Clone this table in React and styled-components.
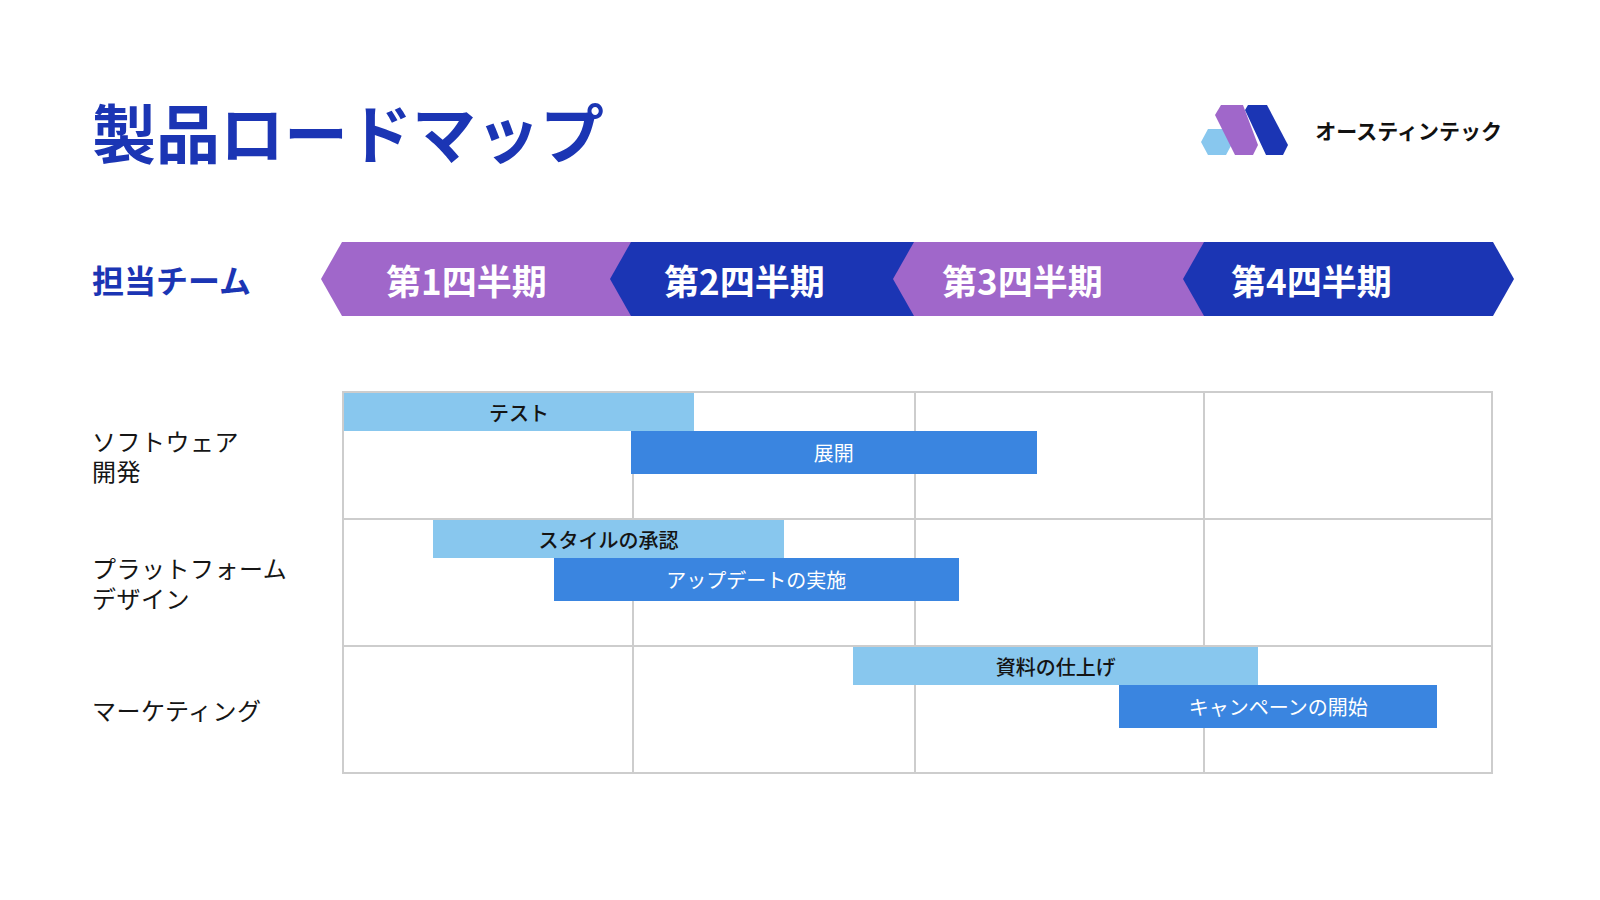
import React from 'react';
import styled, { createGlobalStyle } from 'styled-components';

const C = {
  blue: '#1b35b4',
  purple: '#a067ca',
  light: '#88c7ee',
  mid: '#3a85e0',
  line: '#cdcdcd',
  ink: '#151515',
};

const COLS = '289fr 283fr 290fr 289fr';

const GlobalStyle = createGlobalStyle`
  html, body { margin: 0; padding: 0; background: #fff; }
  body { font-family: "Noto Sans CJK JP", "Noto Sans", sans-serif; }
`;

const Page = styled.div`
  width: 1600px;
  height: 900px;
  box-sizing: border-box;
  padding: 93px 98px 0 92px;
  display: flex;
  flex-direction: column;
  gap: 75px;
  background: #fff;
`;

const Header = styled.header`
  height: 74px;
  display: flex;
  align-items: center;
  justify-content: space-between;
`;

const Title = styled.h1`
  margin: 0;
  font-size: 64px;
  line-height: 74px;
  font-weight: 700;
  color: ${C.blue};
`;

const Brand = styled.div`
  display: flex;
  align-items: center;
  gap: 25px;
`;

const BrandName = styled.span`
  font-size: 21px;
  font-weight: 700;
  color: #111;
`;

const QuarterRow = styled.div`
  display: grid;
  grid-template-columns: 250px 1151px;
  align-items: center;
  height: 74px;
`;

const TeamHeading = styled.div`
  font-size: 32px;
  font-weight: 700;
  color: ${C.blue};
`;

const Chevrons = styled.div`
  display: grid;
  grid-template-columns: ${COLS};
  height: 74px;
`;

const Chevron = styled.div`
  margin-left: -21px;
  margin-right: ${(p) => (p.$last ? '-21px' : '0')};
  background: ${(p) => (p.$tone === 'purple' ? C.purple : C.blue)};
  clip-path: ${(p) =>
    p.$last
      ? 'polygon(21px 0, calc(100% - 21px) 0, 100% 50%, calc(100% - 21px) 100%, 21px 100%, 0 50%)'
      : 'polygon(21px 0, 100% 0, 100% 100%, 21px 100%, 0 50%)'};
  display: flex;
  align-items: center;
  padding-left: ${(p) => p.$inset}px;
  color: #fff;
  font-size: 35px;
  font-weight: 700;
`;

const Timeline = styled.div`
  display: flex;
  flex-direction: column;
`;

const Lane = styled.div`
  display: grid;
  grid-template-columns: 250px 1151px;
  & + & { margin-top: -2px; }
`;

const LaneLabel = styled.div`
  align-self: center;
  font-size: 24px;
  line-height: 30px;
  letter-spacing: 0.5px;
  color: ${C.ink};
`;

const Track = styled.div`
  display: grid;
  height: 125px;
  border: 2px solid ${C.line};
`;

const Cells = styled.div`
  grid-area: 1 / 1;
  display: grid;
  grid-template-columns: ${COLS};
`;

const Cell = styled.div`
  & + & { border-left: 2px solid ${C.line}; }
`;

const Bars = styled.div`
  grid-area: 1 / 1;
  display: flex;
  flex-direction: column;
  align-items: flex-start;
`;

const Bar = styled.div`
  box-sizing: border-box;
  height: ${(p) => (p.$kind === 'light' ? 38 : 43)}px;
  background: ${(p) => (p.$kind === 'light' ? C.light : C.mid)};
  color: ${(p) => (p.$kind === 'light' ? '#141414' : '#fff')};
  font-weight: ${(p) => (p.$kind === 'light' ? 500 : 400)};
  font-size: 20px;
  display: flex;
  align-items: center;
  justify-content: center;
  white-space: nowrap;
`;

const quarters = [
  { label: '第1四半期', tone: 'purple', inset: 65 },
  { label: '第2四半期', tone: 'blue', inset: 54 },
  { label: '第3四半期', tone: 'purple', inset: 49 },
  { label: '第4四半期', tone: 'blue', inset: 48 },
];

const lanes = [
  {
    label: ['ソフトウェア', '開発'],
    bars: [
      { text: 'テスト', kind: 'light', left: 0, width: 30.5 },
      { text: '展開', kind: 'dark', left: 25.0, width: 35.4 },
    ],
  },
  {
    label: ['プラットフォーム', 'デザイン'],
    bars: [
      { text: 'スタイルの承認', kind: 'light', left: 7.76, width: 30.6 },
      { text: 'アップデートの実施', kind: 'dark', left: 18.3, width: 35.3 },
    ],
  },
  {
    label: ['マーケティング'],
    bars: [
      { text: '資料の仕上げ', kind: 'light', left: 44.4, width: 35.3 },
      { text: 'キャンペーンの開始', kind: 'dark', left: 67.6, width: 27.7 },
    ],
  },
];

function Logo() {
  return (
    <svg width="90" height="52" viewBox="0 0 90 52" aria-hidden="true">
      <polygon points="1,38 8,25 26,25 33,38 26,51 8,51" fill={C.light} />
      <polygon points="15,11 21,1 43,1 58,41 53,51 35,51" fill={C.purple} />
      <polygon points="45,6 48,1 67,1 88,41 83,51 66,51" fill={C.blue} />
    </svg>
  );
}

export default function App() {
  return (
    <>
      <GlobalStyle />
      <Page>
        <Header>
          <Title>製品ロードマップ</Title>
          <Brand>
            <Logo />
            <BrandName>オースティンテック</BrandName>
          </Brand>
        </Header>

        <QuarterRow>
          <TeamHeading>担当チーム</TeamHeading>
          <Chevrons>
            {quarters.map((q, i) => (
              <Chevron key={q.label} $tone={q.tone} $inset={q.inset} $last={i === quarters.length - 1}>
                {q.label}
              </Chevron>
            ))}
          </Chevrons>
        </QuarterRow>

        <Timeline>
          {lanes.map((lane) => (
            <Lane key={lane.label.join('')}>
              <LaneLabel>
                {lane.label.map((l, i) => (
                  <React.Fragment key={l}>
                    {i > 0 && <br />}
                    {l}
                  </React.Fragment>
                ))}
              </LaneLabel>
              <Track>
                <Cells>
                  <Cell />
                  <Cell />
                  <Cell />
                  <Cell />
                </Cells>
                <Bars>
                  {lane.bars.map((b) => (
                    <Bar
                      key={b.text}
                      $kind={b.kind}
                      style={{ marginLeft: `${b.left}%`, width: `${b.width}%` }}
                    >
                      {b.text}
                    </Bar>
                  ))}
                </Bars>
              </Track>
            </Lane>
          ))}
        </Timeline>
      </Page>
    </>
  );
}
